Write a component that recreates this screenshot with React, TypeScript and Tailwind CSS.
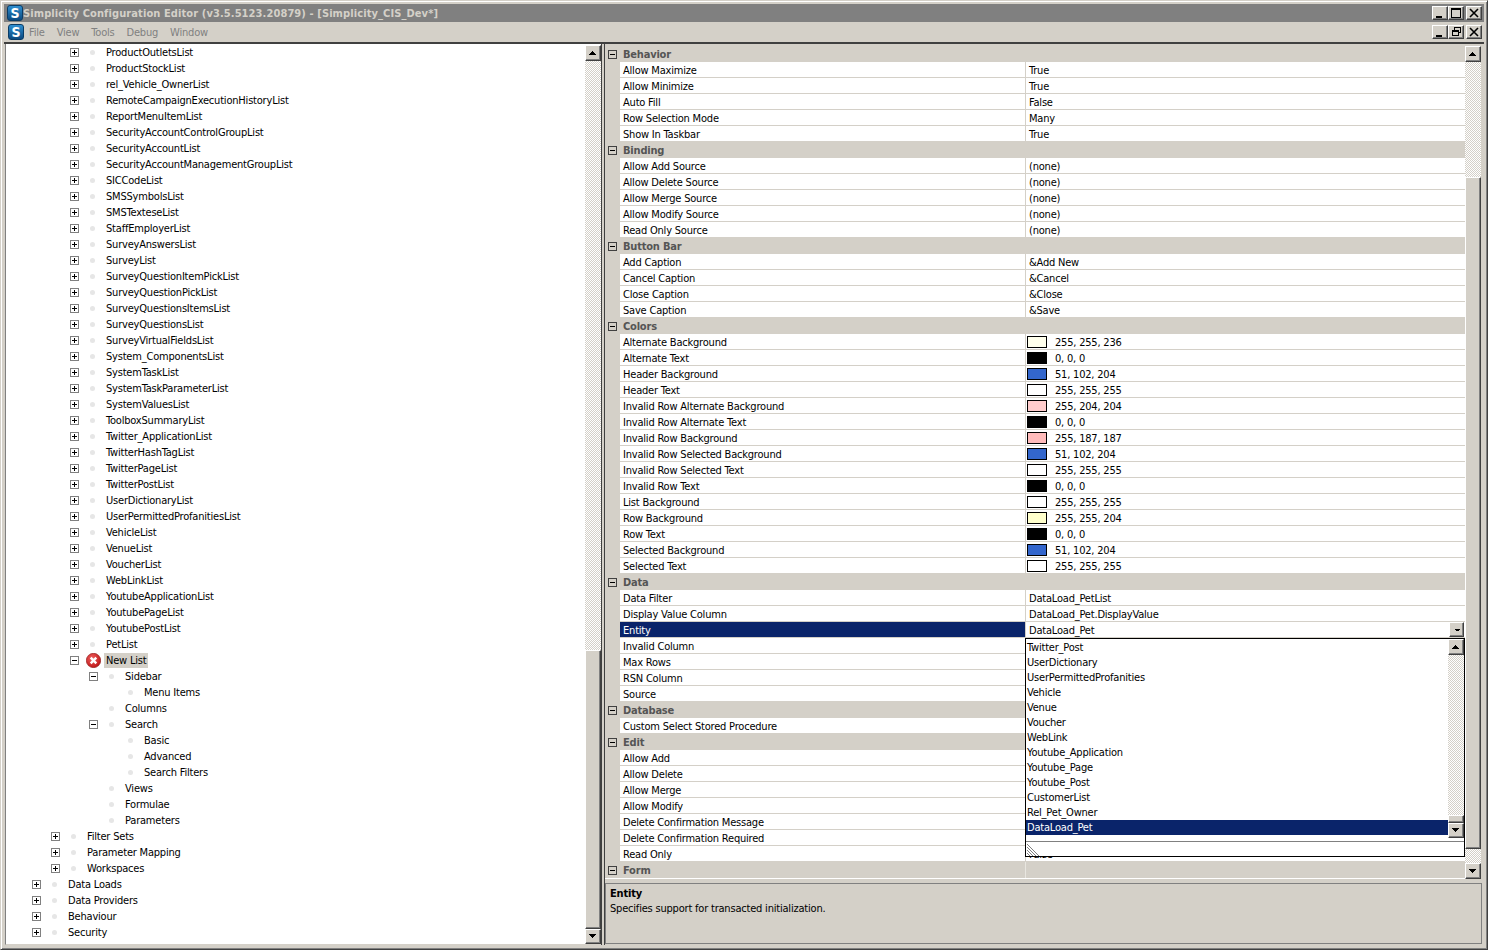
import React from "react";

const btn3d = "border border-t-white border-l-white border-r-[#404040] border-b-[#404040] shadow-[inset_-1px_-1px_0_#808080] bg-[#d4d0c8]";
const checker = "bg-[repeating-conic-gradient(#d4d0c8_0_25%,#ffffff_0_50%)] bg-[length:2px_2px]";

type Node = { l: number; t: string; e?: "+" | "-"; err?: boolean };
const plus = (t: string): Node => ({ l: 2, t, e: "+" });
const treeRows: Node[] = [
  ...[
    "ProductOutletsList", "ProductStockList", "rel_Vehicle_OwnerList", "RemoteCampaignExecutionHistoryList", "ReportMenuItemList",
    "SecurityAccountControlGroupList", "SecurityAccountList", "SecurityAccountManagementGroupList", "SICCodeList", "SMSSymbolsList",
    "SMSTexteseList", "StaffEmployerList", "SurveyAnswersList", "SurveyList", "SurveyQuestionItemPickList", "SurveyQuestionPickList",
    "SurveyQuestionsItemsList", "SurveyQuestionsList", "SurveyVirtualFieldsList", "System_ComponentsList", "SystemTaskList",
    "SystemTaskParameterList", "SystemValuesList", "ToolboxSummaryList", "Twitter_ApplicationList", "TwitterHashTagList", "TwitterPageList",
    "TwitterPostList", "UserDictionaryList", "UserPermittedProfanitiesList", "VehicleList", "VenueList", "VoucherList", "WebLinkList",
    "YoutubeApplicationList", "YoutubePageList", "YoutubePostList", "PetList",
  ].map(plus),
  { l: 2, t: "New List", e: "-", err: true },
  { l: 3, t: "Sidebar", e: "-" },
  { l: 4, t: "Menu Items" },
  { l: 3, t: "Columns" },
  { l: 3, t: "Search", e: "-" },
  { l: 4, t: "Basic" },
  { l: 4, t: "Advanced" },
  { l: 4, t: "Search Filters" },
  { l: 3, t: "Views" },
  { l: 3, t: "Formulae" },
  { l: 3, t: "Parameters" },
  { l: 1, t: "Filter Sets", e: "+" },
  { l: 1, t: "Parameter Mapping", e: "+" },
  { l: 1, t: "Workspaces", e: "+" },
  { l: 0, t: "Data Loads", e: "+" },
  { l: 0, t: "Data Providers", e: "+" },
  { l: 0, t: "Behaviour", e: "+" },
  { l: 0, t: "Security", e: "+" },
];

const indent = ["pl-[26px]", "pl-[45px]", "pl-[64px]", "pl-[83px]", "pl-[102px]"];

type Prop = { n: string; v?: string; c?: string; sel?: boolean };
const groups: { name: string; rows: Prop[] }[] = [
  { name: "Behavior", rows: [
    { n: "Allow Maximize", v: "True" }, { n: "Allow Minimize", v: "True" }, { n: "Auto Fill", v: "False" },
    { n: "Row Selection Mode", v: "Many" }, { n: "Show In Taskbar", v: "True" } ] },
  { name: "Binding", rows: [
    { n: "Allow Add Source", v: "(none)" }, { n: "Allow Delete Source", v: "(none)" }, { n: "Allow Merge Source", v: "(none)" },
    { n: "Allow Modify Source", v: "(none)" }, { n: "Read Only Source", v: "(none)" } ] },
  { name: "Button Bar", rows: [
    { n: "Add Caption", v: "&Add New" }, { n: "Cancel Caption", v: "&Cancel" }, { n: "Close Caption", v: "&Close" }, { n: "Save Caption", v: "&Save" } ] },
  { name: "Colors", rows: [
    { n: "Alternate Background", v: "255, 255, 236", c: "bg-[#ffffec]" },
    { n: "Alternate Text", v: "0, 0, 0", c: "bg-black" },
    { n: "Header Background", v: "51, 102, 204", c: "bg-[#3366cc]" },
    { n: "Header Text", v: "255, 255, 255", c: "bg-white" },
    { n: "Invalid Row Alternate Background", v: "255, 204, 204", c: "bg-[#ffcccc]" },
    { n: "Invalid Row Alternate Text", v: "0, 0, 0", c: "bg-black" },
    { n: "Invalid Row Background", v: "255, 187, 187", c: "bg-[#ffbbbb]" },
    { n: "Invalid Row Selected Background", v: "51, 102, 204", c: "bg-[#3366cc]" },
    { n: "Invalid Row Selected Text", v: "255, 255, 255", c: "bg-white" },
    { n: "Invalid Row Text", v: "0, 0, 0", c: "bg-black" },
    { n: "List Background", v: "255, 255, 255", c: "bg-white" },
    { n: "Row Background", v: "255, 255, 204", c: "bg-[#ffffcc]" },
    { n: "Row Text", v: "0, 0, 0", c: "bg-black" },
    { n: "Selected Background", v: "51, 102, 204", c: "bg-[#3366cc]" },
    { n: "Selected Text", v: "255, 255, 255", c: "bg-white" } ] },
  { name: "Data", rows: [
    { n: "Data Filter", v: "DataLoad_PetList" }, { n: "Display Value Column", v: "DataLoad_Pet.DisplayValue" },
    { n: "Entity", v: "DataLoad_Pet", sel: true }, { n: "Invalid Column" }, { n: "Max Rows" }, { n: "RSN Column" }, { n: "Source" } ] },
  { name: "Database", rows: [{ n: "Custom Select Stored Procedure" }] },
  { name: "Edit", rows: [
    { n: "Allow Add" }, { n: "Allow Delete" }, { n: "Allow Merge" }, { n: "Allow Modify" },
    { n: "Delete Confirmation Message" }, { n: "Delete Confirmation Required" }, { n: "Read Only", v: "False" } ] },
  { name: "Form", rows: [] },
];

const dropItems = ["Twitter_Post", "UserDictionary", "UserPermittedProfanities", "Vehicle", "Venue", "Voucher", "WebLink", "Youtube_Application", "Youtube_Page", "Youtube_Post", "CustomerList", "Rel_Pet_Owner", "DataLoad_Pet"];

function Expander({ kind, dark }: { kind: "+" | "-"; dark?: boolean }) {
  return (
    <svg width="9" height="9" viewBox="0 0 9 9" className="block shrink-0" shapeRendering="crispEdges">
      <rect x="0.5" y="0.5" width="8" height="8" fill={dark ? "#d4d0c8" : "#fff"} stroke={dark ? "#404040" : "#808080"} />
      <path d="M2 4.5H7" stroke="#000" />
      {kind === "+" && <path d="M4.5 2V7" stroke="#000" />}
    </svg>
  );
}

function Logo({ className }: { className: string }) {
  return (
    <div className={`${className} flex items-center justify-center rounded-[3px] bg-gradient-to-b from-[#2f8fd0] to-[#0b4a80] border border-[#0a3c66] text-white font-bold text-[14px] leading-none shrink-0`}>S</div>
  );
}

function Arrow({ up, small }: { up?: boolean; small?: boolean }) {
  return (
    <svg width="8" height="5" viewBox="0 0 8 5" className="block" shapeRendering="crispEdges">
      {small ? (
        <path d="M1 1H6V2H5V3H2V2H1Z" fill="#000" transform="translate(0.5,0.5)" />
      ) : up ? (
        <path d="M3 0H4V1H5V2H6V3H7V4H0V3H1V2H2V1H3Z" fill="#000" />
      ) : (
        <path d="M0 0H7V1H6V2H5V3H4V4H3V3H2V2H1V1H0Z" fill="#000" />
      )}
    </svg>
  );
}

function SbBtn({ up, h = "h-4" }: { up?: boolean; h?: string }) {
  return <div className={`${h} w-full shrink-0 flex items-center justify-center ${btn3d}`}><Arrow up={up} /></div>;
}

function WinBtn({ kind, className = "" }: { kind: "min" | "max" | "restore" | "close"; className?: string }) {
  return (
    <div className={`w-4 h-[14px] flex items-center justify-center ${btn3d} ${className}`}>
      <svg width="12" height="10" viewBox="0 0 12 10" className="block">
        {kind === "min" && <rect x="2" y="8" width="6" height="2" fill="#000" shapeRendering="crispEdges" />}
        {kind === "max" && <path d="M1 0H11V10H1ZM2 2V9H10V2Z" fill="#000" fillRule="evenodd" shapeRendering="crispEdges" />}
        {kind === "restore" && <path d="M4 0H11V6H9V9H2V3H4ZM5 1V3H9V5H10V1ZM3 5V8H8V5Z" fill="#000" fillRule="evenodd" shapeRendering="crispEdges" />}
        {kind === "close" && <path d="M2 1L10 9M10 1L2 9" stroke="#000" strokeWidth="1.6" />}
      </svg>
    </div>
  );
}

function TreeRow({ node }: { node: Node }) {
  return (
    <div className={`h-4 flex items-center text-black ${indent[node.l]}`}>
      <div className="w-[19px] shrink-0">{node.e && <Expander kind={node.e} />}</div>
      <div className="w-[15px] h-4 shrink-0 relative flex items-center">
        {node.err ? (
          <svg width="15" height="15" viewBox="0 0 15 15" className="absolute left-[-3px] top-[1px]">
            <defs>
              <radialGradient id="errGrad" cx="0.4" cy="0.35" r="0.75">
                <stop offset="0" stopColor="#f06060" />
                <stop offset="1" stopColor="#b80f0f" />
              </radialGradient>
            </defs>
            <circle cx="7.5" cy="7.5" r="7.2" fill="url(#errGrad)" stroke="#8c1010" strokeWidth="0.6" />
            <path d="M4.7 4.7L10.3 10.3M10.3 4.7L4.7 10.3" stroke="#fff" strokeWidth="2.4" />
          </svg>
        ) : (
          <div className="w-[5px] h-[5px] ml-[1px] rounded-full bg-[#e6e6e6]" />
        )}
      </div>
      <span className={`self-start mt-px px-[2px] leading-[15px] h-[15px] whitespace-nowrap ${node.err ? "bg-[#d4d0c8]" : ""}`}>{node.t}</span>
    </div>
  );
}

function PropRow({ p }: { p: Prop }) {
  return (
    <div className="h-4 flex border-b border-[#d4d0c8]">
      <div className="w-[15px] shrink-0 bg-[#d4d0c8] -mb-px" />
      <div className={`w-[405px] shrink-0 pl-[3px] leading-[17px] whitespace-nowrap ${p.sel ? "bg-[#0a246a] text-white" : "bg-white text-black"}`}>{p.n}</div>
      <div className="flex-1 bg-white border-l border-[#d4d0c8] pl-[3px] leading-[17px] flex items-start whitespace-nowrap text-black relative">
        {p.c && <div className={`w-5 h-3 mt-[2px] border border-black ml-[-2px] mr-2 shrink-0 ${p.c}`} />}
        <span>{p.v}</span>
        {p.sel && (
          <div className={`absolute right-[1px] top-0 w-[15px] h-[15px] flex items-center justify-center ${btn3d}`}><Arrow small /></div>
        )}
      </div>
    </div>
  );
}

function Category({ name }: { name: string }) {
  return (
    <div className="h-4 flex bg-[#d4d0c8]">
      <div className="w-[420px] shrink-0 flex items-center">
        <div className="w-[15px] shrink-0 flex justify-center"><Expander kind="-" dark /></div>
        <span className="self-start mt-px pl-[3px] font-bold text-[#555555] leading-[15px]">{name}</span>
      </div>
      <div className={`flex-1 ${name === "Form" ? "border-l border-[#e8e6e0]" : ""}`} />
    </div>
  );
}

function Dropdown() {
  return (
    <div className="absolute left-[420px] top-[592px] w-[440px] h-[219px] border border-black bg-white flex flex-col">
      <div className="h-[199px] flex shrink-0">
        <div className="flex-1 pt-px">
          {dropItems.map((d, i) => (
            <div key={d} className={`h-[15px] pl-[1px] leading-[15px] whitespace-nowrap ${i === dropItems.length - 1 ? "bg-[#0a246a] text-white" : "text-black"}`}>{d}</div>
          ))}
        </div>
        <div className="w-4 flex flex-col">
          <SbBtn up />
          <div className={`h-[160px] ${checker}`} />
          <div className={`h-2 ${btn3d}`} />
          <SbBtn h="h-[15px]" />
        </div>
      </div>
      <div className="h-[3px] shrink-0" />
      <div className="flex-1 border-t border-[#808080] relative overflow-hidden">
        <svg width="12" height="14" viewBox="0 0 12 14" className="absolute left-[1px] top-0">
          <path d="M0 2L12 14M0 5L9 14M0 8L6 14M0 11L3 14" stroke="#808080" strokeWidth="1" />
        </svg>
      </div>
    </div>
  );
}

export default function App() {
  return (
    <div className="w-[1488px] h-[950px] overflow-hidden bg-[#d4d0c8] border border-t-[#d4d0c8] border-l-[#d4d0c8] border-r-[#404040] border-b-[#404040] shadow-[inset_1px_1px_0_#ffffff,inset_-1px_-1px_0_#808080] p-[3px] flex flex-col text-[11px] tracking-[-0.2px] font-['DejaVu_Sans_Condensed','Liberation_Sans',sans-serif]">
      {/* Title bar */}
      <div className="h-[18px] shrink-0 bg-[#808080] flex items-center pl-[3px] pr-[2px]">
        <Logo className="w-4 h-4" />
        <span className="self-start h-[18px] leading-[19px] text-[#d4d0c8] font-bold whitespace-nowrap tracking-[0.1px]">Simplicity Configuration Editor (v3.5.5123.20879) - [Simplicity_CIS_Dev*]</span>
        <div className="ml-auto flex">
          <WinBtn kind="min" />
          <WinBtn kind="max" />
          <WinBtn kind="close" className="ml-[2px]" />
        </div>
      </div>
      {/* Menu bar */}
      <div className="h-[20px] shrink-0 flex items-center pl-[4px] pr-[2px] text-[#808080]">
        <Logo className="w-4 h-4" />
        <div className="flex gap-[12px] ml-[5px] self-start leading-[21px]">
          <span>File</span><span>View</span><span>Tools</span><span>Debug</span><span>Window</span>
        </div>
        <div className="ml-auto flex">
          <WinBtn kind="min" />
          <WinBtn kind="restore" />
          <WinBtn kind="close" className="ml-[2px]" />
        </div>
      </div>
      {/* Main */}
      <div className="flex-1 min-h-0 flex border-t-2 border-[#404040] pl-px pr-[1px] pb-[1px]">
        {/* Left */}
        <div className="w-[596px] shrink-0 bg-white flex border-l border-[#808080] border-b border-b-[#d4d0c8]">
          <div className="flex-1 overflow-hidden">
            {treeRows.map((n) => <TreeRow key={n.t} node={n} />)}
          </div>
          <div className="w-4 shrink-0 flex flex-col pt-px">
            <SbBtn up />
            <div className={`h-[589px] ${checker}`} />
            <div className={`h-[279px] ${btn3d}`} />
            <SbBtn h="h-[15px]" />
          </div>
        </div>
        {/* Splitter */}
        <div className="w-[4px] shrink-0 border-x border-[#404040] bg-[#d4d0c8]" />
        {/* Right */}
        <div className="flex-1 min-w-0 flex flex-col pt-[2px]">
          <div className="flex h-[833px] shrink-0">
            <div className="w-[860px] relative shrink-0">
              <div className="bg-white">
                {groups.map((g) => (
                  <React.Fragment key={g.name}>
                    <Category name={g.name} />
                    {g.rows.map((r) => <PropRow key={r.n} p={r} />)}
                  </React.Fragment>
                ))}
              </div>
              <div className="h-px bg-white" />
              <Dropdown />
            </div>
            <div className="w-4 shrink-0 flex flex-col">
              <SbBtn up />
              <div className={`h-[115px] ${checker}`} />
              <div className={`h-[672px] ${btn3d}`} />
              <div className={`h-[14px] ${checker}`} />
              <SbBtn />
            </div>
          </div>
          <div className="h-[4px] shrink-0" />
          <div className="h-[61px] w-[877px] shrink-0 border border-[#808080] pl-[4px] pt-[2px] text-black">
            <div className="font-bold leading-[15px]">Entity</div>
            <div className="leading-[15px]">Specifies support for transacted initialization.</div>
          </div>
        </div>
      </div>
    </div>
  );
}
